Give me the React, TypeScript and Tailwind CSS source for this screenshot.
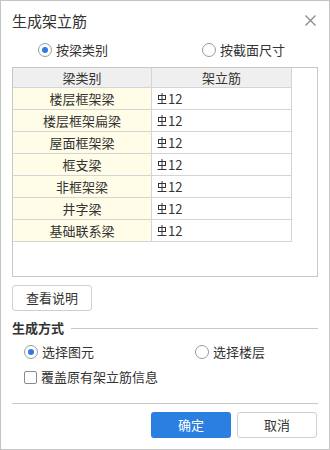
import React from "react";

const rows = ["楼层框架梁", "楼层框架扁梁", "屋面框架梁", "框支梁", "非框架梁", "井字梁", "基础联系梁"];

function Radio({ checked }: { checked: boolean }) {
  return (
    <span className="w-[14px] h-[14px] rounded-full border border-[#9a9a9a] bg-white flex items-center justify-center shrink-0">
      {checked && <span className="w-[6px] h-[6px] rounded-full bg-[#2b7de0]" />}
    </span>
  );
}

function Rebar() {
  return (
    <svg width="10" height="12" viewBox="0 0 10 12" className="shrink-0" fill="none" stroke="#333" strokeWidth="1">
      <rect x="1.5" y="2.5" width="7" height="4" />
      <line x1="5" y1="0" x2="5" y2="10" />
      <line x1="0.5" y1="10.5" x2="9.5" y2="10.5" />
    </svg>
  );
}

export default function App() {
  return (
    <div
      className="w-[330px] h-[450px] border border-[#c4c4c4] bg-white text-[13px] text-[#333] flex flex-col"
      style={{ fontFamily: '"Noto Sans CJK SC", "Noto Sans", sans-serif' }}
    >
      <div className="h-[38px] shrink-0 flex items-center justify-between pl-[11px] pr-[13px]">
        <span className="text-[15px] text-[#333] leading-none">生成架立筋</span>
        <svg width="11" height="11" viewBox="0 0 11 11" stroke="#8a8a8a" strokeWidth="1.2">
          <line x1="0.5" y1="0.5" x2="10.5" y2="10.5" />
          <line x1="10.5" y1="0.5" x2="0.5" y2="10.5" />
        </svg>
      </div>

      <div className="px-[11px] flex flex-col">
        <div className="h-[22px] flex items-center pl-[26px]">
          <div className="w-[164px] flex items-center gap-[4px]">
            <Radio checked />
            <span>按梁类别</span>
          </div>
          <div className="flex items-center gap-[4px]">
            <Radio checked={false} />
            <span>按截面尺寸</span>
          </div>
        </div>

        <div className="mt-[6px] h-[210px] border border-[#c8c8c8]">
          <div className="grid grid-cols-[139px_140px] w-[279px]">
            <div className="h-[20px] bg-[#efefef] border-r border-b border-[#d4d4d4] flex items-center justify-center">梁类别</div>
            <div className="h-[20px] bg-[#efefef] border-r border-b border-[#d4d4d4] flex items-center justify-center">架立筋</div>
            {rows.map((r) => (
              <React.Fragment key={r}>
                <div className="h-[22px] bg-[#fffde8] border-r border-b border-[#d4d4d4] flex items-center justify-center">{r}</div>
                <div className="h-[22px] bg-white border-r border-b border-[#d4d4d4] flex items-center pl-[5px] gap-[1px]">
                  <Rebar />
                  <span>12</span>
                </div>
              </React.Fragment>
            ))}
          </div>
        </div>

        <button className="mt-[8px] w-[80px] h-[26px] border border-[#cfcfcf] rounded-[3px] bg-white flex items-center justify-center text-[13px] text-[#333]">
          查看说明
        </button>

        <div className="mt-[7px] h-[20px] flex items-center gap-[7px]">
          <span className="font-bold text-[#333]">生成方式</span>
          <div className="flex-1 h-px bg-[#c8c8c8]" />
        </div>

        <div className="mt-[3px] h-[22px] flex items-center pl-[12px]">
          <div className="w-[171px] flex items-center gap-[4px]">
            <Radio checked />
            <span>选择图元</span>
          </div>
          <div className="flex items-center gap-[4px]">
            <Radio checked={false} />
            <span>选择楼层</span>
          </div>
        </div>

        <div className="mt-[3px] h-[22px] flex items-center pl-[12px] gap-[4px]">
          <span className="w-[13px] h-[13px] border border-[#8a8a8a] rounded-[2px] bg-white shrink-0" />
          <span>覆盖原有架立筋信息</span>
        </div>

        <div className="mt-[15px] h-px bg-[#c8c8c8]" />

        <div className="mt-[8px] flex justify-end gap-[6px] pr-[1px]">
          <button className="w-[80px] h-[26px] rounded-[3px] bg-[#2b7fe0] text-white text-[13px] flex items-center justify-center">
            确定
          </button>
          <button className="w-[80px] h-[26px] rounded-[3px] border border-[#cfcfcf] bg-white text-[#333] text-[13px] flex items-center justify-center">
            取消
          </button>
        </div>
      </div>
    </div>
  );
}
